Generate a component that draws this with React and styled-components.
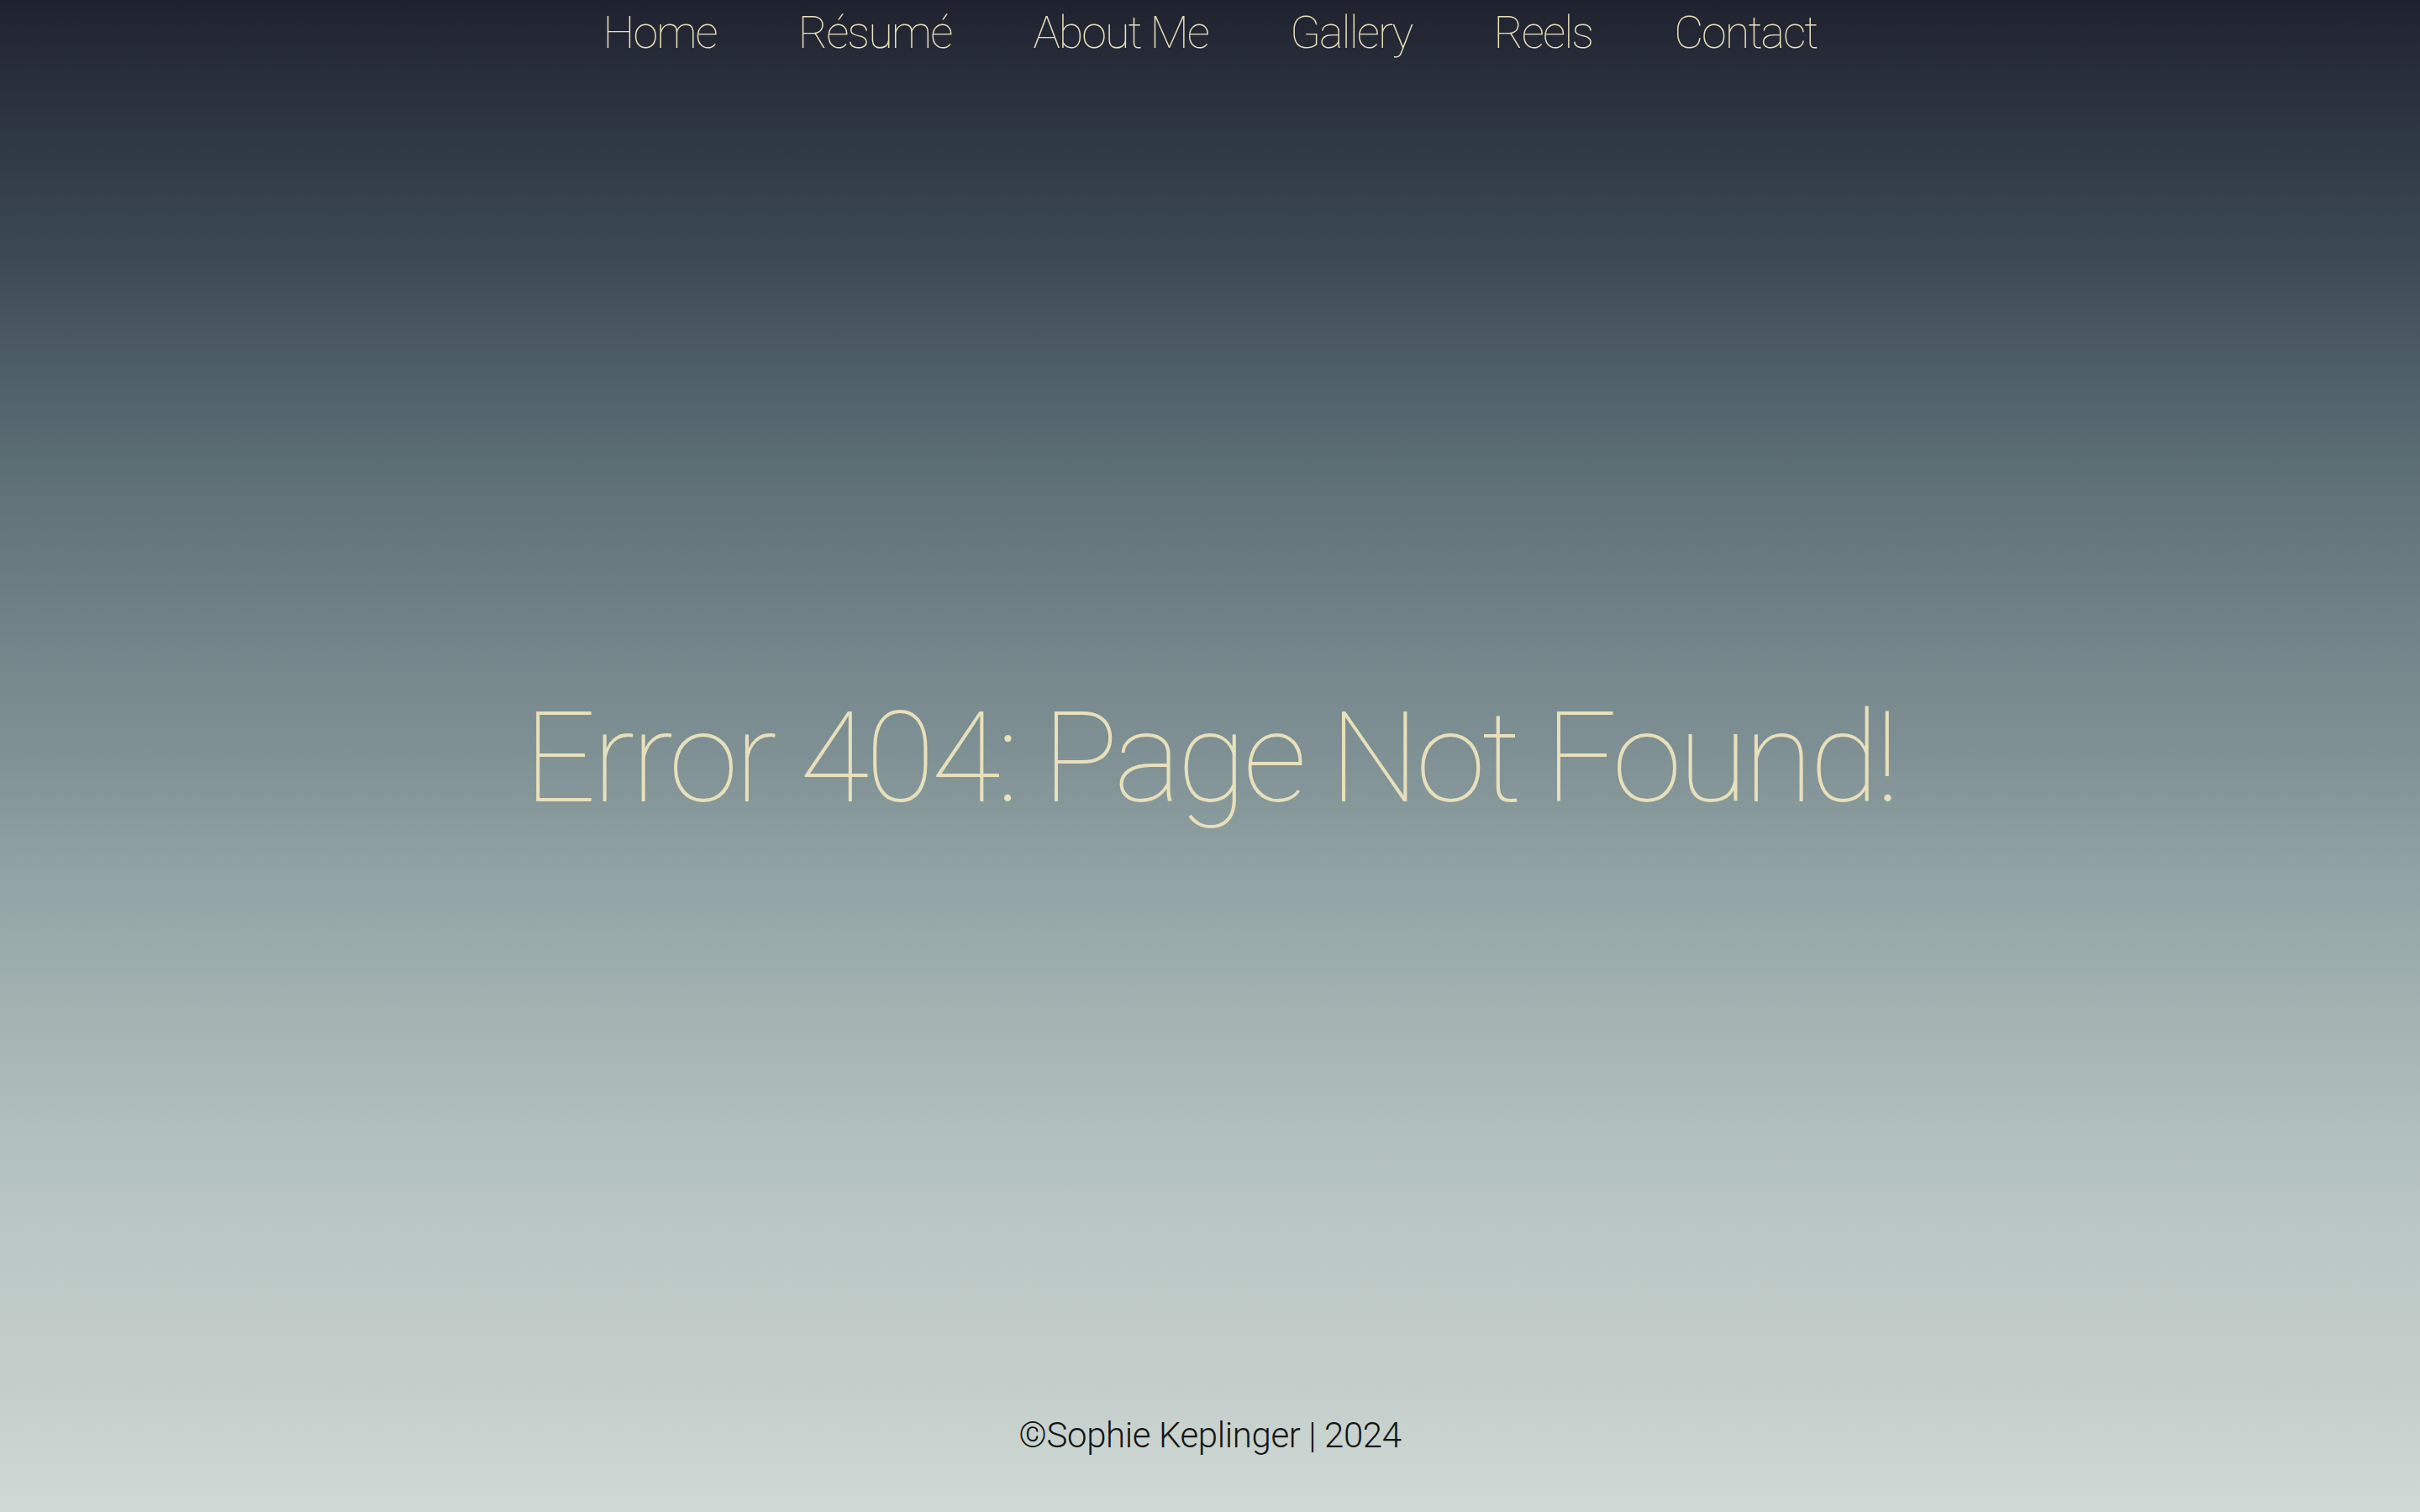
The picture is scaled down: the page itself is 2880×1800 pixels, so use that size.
import React from "react";
import styled, { createGlobalStyle } from "styled-components";

const GlobalStyle = createGlobalStyle`
  html, body { margin: 0; padding: 0; }
  body {
    font-family: "Roboto", "Liberation Sans", sans-serif;
  }
`;

const Page = styled.div`
  min-height: 100vh;
  display: flex;
  flex-direction: column;
  background: linear-gradient(
    to bottom,
    #1f222e 0%,
    #2e3744 9%,
    #3c4954 17%,
    #4f5f68 25%,
    #617379 33%,
    #728489 42%,
    #7f9194 50%,
    #91a3a4 58%,
    #a3b3b2 67%,
    #b1bfbd 75%,
    #bcc8c5 83%,
    #c4cfcb 92%,
    #cfd9d5 100%
  );
`;

const Nav = styled.nav`
  display: flex;
  justify-content: center;
  gap: 97px;
  padding-top: 12px;
`;

const NavLink = styled.a`
  font-family: "Roboto", sans-serif;
  font-weight: 100;
  font-size: 54px;
  line-height: 1;
  color: #e8e0bb;
  text-decoration: none;
  letter-spacing: -2px;
  cursor: pointer;
`;

const Main = styled.main`
  flex: 1;
  display: flex;
  align-items: center;
  justify-content: center;
  padding-top: 50px;
`;

const Title = styled.h1`
  margin: 0;
  font-family: "Roboto", sans-serif;
  font-weight: 100;
  font-size: 151px;
  line-height: 1;
  letter-spacing: -4.5px;
  color: #e8e0bb;
  white-space: nowrap;
`;

const Footer = styled.footer`
  display: flex;
  justify-content: center;
  padding-bottom: 70px;
`;

const FooterText = styled.p`
  margin: 0;
  font-family: "Roboto", sans-serif;
  font-weight: 300;
  font-size: 42px;
  line-height: 1;
  color: #141414;
  letter-spacing: -0.4px;
`;

const links = ["Home", "Résumé", "About Me", "Gallery", "Reels", "Contact"];

export default function App() {
  return (
    <>
      <GlobalStyle />
      <Page>
        <Nav>
          {links.map((l) => (
            <NavLink key={l}>{l}</NavLink>
          ))}
        </Nav>
        <Main>
          <Title>Error 404: Page Not Found!</Title>
        </Main>
        <Footer>
          <FooterText>©Sophie Keplinger | 2024</FooterText>
        </Footer>
      </Page>
    </>
  );
}
